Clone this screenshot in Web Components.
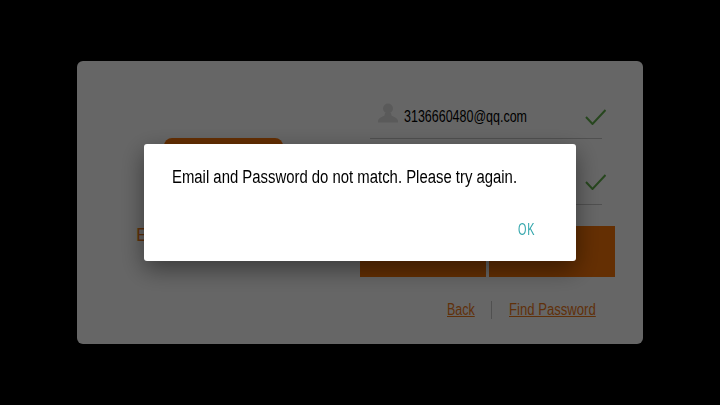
<!DOCTYPE html>
<html>
<head>
<meta charset="utf-8">
<style>
	html, body { margin: 0; height: 100%; background: #000; }
	body { display: grid; place-items: center; overflow: hidden; font-family: "Liberation Sans", sans-serif; }
</style>
</head>
<body>
<login-card>
	<form-row slot="rows" value="3136660480@qq.com" icon></form-row>
	<form-row slot="rows" tall></form-row>
	<login-link slot="links" style="--w: 28px; --sx: 0.78">Back</login-link>
	<login-link slot="links" style="--w: 87px; --sx: 0.82" divided>Find Password</login-link>
</login-card>
<alert-dialog action="OK">Email and Password do not match. Please try again.</alert-dialog>

<script>
class FormRow extends HTMLElement {
	connectedCallback() {
		const value = this.getAttribute("value") || "";
		const icon = this.hasAttribute("icon") ? `
			<svg class="user" width="22" height="22" viewBox="0 0 22 22">
				<circle cx="11" cy="6.5" r="5"/>
				<path d="M8 11 L14 11 L14.5 13.5 C17 15 20 15.5 21 18.5 L21 20.5 L1 20.5 L1 18.5 C2 15.5 5 15 7.5 13.5 Z"/>
			</svg>` : "";
		this.attachShadow({ mode: "open" }).innerHTML = `
			<style>
				:host { display: flex; align-items: center; height: 44px; margin: 0 13px 0 10px; padding: 0 0 0 8px; border-bottom: 1px solid #c8c8c8; font-size: 16px; color: #000; }
				:host([tall]) { height: 65px; align-items: flex-end; }
				:host([tall]) .check { margin-bottom: 14px; }
				.user { fill: #e2e2e2; flex: none; margin: -6px 4px 0 -1px; }
				.value { margin: 1px 0 0 1px; width: 123px; white-space: nowrap; transform: scaleX(0.78); transform-origin: left; }
				.check { margin: 2px -4px 0 auto; flex: none; fill: none; stroke: #62b04c; stroke-width: 2; }
			</style>
			${icon}<span class="value">${value}</span>
			<svg class="check" width="21" height="16" viewBox="0 0 21 16"><path d="M1 8 L7.5 15 L20.5 1"/></svg>
		`;
	}
}

class LoginLink extends HTMLElement {
	constructor() {
		super();
		this.attachShadow({ mode: "open" }).innerHTML = `
			<style>
				:host { display: inline-flex; align-items: center; width: var(--w); font-size: 16px; color: #f07a1a; }
				:host([divided]) { border-left: 1px solid #c8c8c8; margin-left: 16px; padding-left: 17px; height: 18px; }
				span { white-space: nowrap; text-decoration: underline; transform: scaleX(var(--sx)); transform-origin: left; }
			</style>
			<span><slot></slot></span>
		`;
	}
}

class LoginCard extends HTMLElement {
	constructor() {
		super();
		this.attachShadow({ mode: "open" }).innerHTML = `
			<style>
				:host { display: flex; box-sizing: border-box; width: 566px; height: 283px; padding: 33px 28px 0 59px; background: #fff; border-radius: 6px; }
				.side { width: 224px; flex: none; display: flex; flex-direction: column; }
				.logo { width: 119px; height: 70px; margin: 44px 0 0 28px; background: #f97508; border-radius: 8px; }
				.side-link { margin-top: 17px; font-size: 19px; color: #f07a1a; line-height: 20px; }
				.form { flex: 1; display: flex; flex-direction: column; }
				.buttons { display: grid; grid-template-columns: 1fr 1fr; gap: 3px; margin-top: 21px; }
				.buttons div { height: 51px; background: #f97508; }
				.links { display: flex; justify-content: flex-end; align-items: center; margin: 24px 19px 0 0; }
			</style>
			<div class="side">
				<div class="logo"></div>
				<div class="side-link">E</div>
			</div>
			<div class="form">
				<slot name="rows"></slot>
				<div class="buttons"><div></div><div></div></div>
				<div class="links"><slot name="links"></slot></div>
			</div>
		`;
	}
}

class AlertDialog extends HTMLElement {
	connectedCallback() {
		this.attachShadow({ mode: "open" }).innerHTML = `
			<style>
				:host { position: fixed; inset: 0; display: grid; place-items: center; background: rgba(0, 0, 0, 0.6); }
				.box { box-sizing: border-box; width: 432px; height: 117px; padding: 23px 28px 0; display: flex; flex-direction: column; background: #fff; border-radius: 3px; box-shadow: 0 8px 24px rgba(0, 0, 0, 0.45); }
				.message { font-size: 18px; line-height: 20px; color: #000; white-space: nowrap; transform: scaleX(0.827); transform-origin: left; }
				.action { margin: 34px 13px 0 auto; font-size: 16px; letter-spacing: 1px; color: #35a7ad; transform: scaleX(0.68); transform-origin: right; }
			</style>
			<div class="box">
				<div class="message"><slot></slot></div>
				<div class="action">${this.getAttribute("action")}</div>
			</div>
		`;
	}
}

customElements.define("form-row", FormRow);
customElements.define("login-link", LoginLink);
customElements.define("login-card", LoginCard);
customElements.define("alert-dialog", AlertDialog);
</script>
</body>
</html>
